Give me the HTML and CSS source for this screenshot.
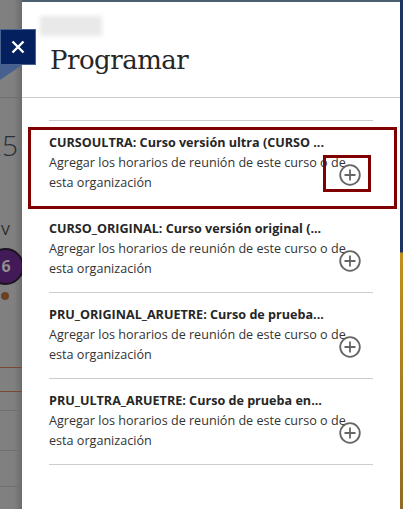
FILE: index.html
```html
<!DOCTYPE html>
<html lang="es">
<head>
<meta charset="utf-8">
<title>Programar</title>
<link rel="stylesheet" href="styles.css">
</head>
<body>
<div class="backdrop">
  <span class="bg-num">25</span>
  <span class="bg-v">V</span>
  <span class="bg-badge">6</span>
  <span class="bg-dot"></span>
  <span class="bg-line l0"></span>
  <span class="bg-line red l1"></span>
  <span class="bg-line red l2"></span>
  <span class="bg-line l3"></span>
  <span class="bg-line l4"></span>
  <span class="bg-line l5"></span>
</div>
<div class="right-edge"></div>
<button class="close" aria-label="Cerrar">
  <svg viewBox="0 0 14 14" width="14" height="14"><path d="M1.5 1.5 12.5 12.5M12.5 1.5 1.5 12.5" stroke="#fff" stroke-width="2.4" fill="none"/></svg>
</button>
<span class="fold"></span>
<main class="panel">
  <header class="head">
    <div class="crumb"></div>
    <h1>Programar</h1>
  </header>
  <ul class="list">
    <li class="row">
      <div class="name">CURSOULTRA: Curso versión ultra (CURSO ...</div>
      <p>Agregar los horarios de reunión de este curso o de esta organización</p>
      <svg class="plus" viewBox="0 0 22 22" width="22" height="22"><circle cx="11" cy="11" r="9.8"/><path d="M11 5.5V16.500M5.500 11H16.500"/></svg>
    </li>
    <li class="row">
      <div class="name">CURSO_ORIGINAL: Curso versión original (...</div>
      <p>Agregar los horarios de reunión de este curso o de esta organización</p>
      <svg class="plus" viewBox="0 0 22 22" width="22" height="22"><circle cx="11" cy="11" r="9.8"/><path d="M11 5.5V16.500M5.500 11H16.500"/></svg>
    </li>
    <li class="row">
      <div class="name">PRU_ORIGINAL_ARUETRE: Curso de prueba...</div>
      <p>Agregar los horarios de reunión de este curso o de esta organización</p>
      <svg class="plus" viewBox="0 0 22 22" width="22" height="22"><circle cx="11" cy="11" r="9.8"/><path d="M11 5.5V16.500M5.500 11H16.500"/></svg>
    </li>
    <li class="row">
      <div class="name">PRU_ULTRA_ARUETRE: Curso de prueba en...</div>
      <p>Agregar los horarios de reunión de este curso o de esta organización</p>
      <svg class="plus" viewBox="0 0 22 22" width="22" height="22"><circle cx="11" cy="11" r="9.8"/><path d="M11 5.5V16.500M5.500 11H16.500"/></svg>
    </li>
  </ul>
</main>
<div class="mark mark-row"></div>
<div class="mark mark-icon"></div>
</body>
</html>
```
FILE: styles.css
```css
* { box-sizing: border-box; }
html, body { margin: 0; height: 100%; }
body {
  position: relative;
  width: 403px;
  height: 509px;
  overflow: hidden;
  background: #7f7f7f;
  font-family: "Open Sans", sans-serif;
  color: #262626;
}
.backdrop {
  position: absolute;
  inset: 0 auto 0 0;
  width: 22px;
  background: linear-gradient(to right, #808080 0, #808080 14px, #6c6c6c 22px);
  overflow: hidden;
}
.bg-num {
  position: absolute; left: -14px; top: 126px;
  font: 300 28px/38px "Open Sans", sans-serif; color: #2a2f36;
}
.bg-v {
  position: absolute; left: 1px; top: 219px;
  font: 15px/20px "Open Sans", sans-serif; color: #2a2a2a;
}
.bg-badge {
  position: absolute; left: -13px; top: 248px;
  width: 37px; height: 37px; border-radius: 50%;
  background: #431a58; border: 2px solid #1b1420;
  color: #8f8f8f; font: 700 16px/33px "Open Sans", sans-serif;
  text-align: center; padding-left: 1px;
}
.bg-dot {
  position: absolute; left: 1px; top: 292px;
  width: 8px; height: 8px; border-radius: 50%; background: #6a4026;
}
.bg-line { position: absolute; left: 0; width: 22px; height: 1px; background: #707070; }
.bg-line.red { background: #7a4a30; }
.l0 { top: 97px; } .l1 { top: 367px; } .l2 { top: 391px; } .l3 { top: 410px; } .l4 { top: 450px; } .l5 { top: 486px; }
.right-edge {
  position: absolute; right: 0; top: 0; bottom: 0; width: 3px;
  background: linear-gradient(to bottom, #1d3461 0, #1d3461 252px, #c2901f 253px, #8f6a24 509px);
}
.panel {
  position: absolute;
  left: 22px; top: 2px;
  width: 378px; height: 507px;
  background: #fff;
  box-shadow: 0 -2px 0 #4b5f6c;
}
.head {
  height: 96px;
  padding: 14px 0 0 28px;
  border-bottom: 1px solid #cdcdcd;
}
.crumb {
  width: 62px; height: 20px;
  margin-left: -10px;
  background: #e9e9e9;
  filter: blur(2px);
}
h1 {
  margin: 7px 0 0;
  font: 400 26px/34px "DejaVu Serif", serif;
  letter-spacing: -0.5px;
  color: #262626;
}
.list {
  list-style: none;
  margin: 22px 0 0 27px;
  padding: 0;
  width: 324px;
  border-top: 1px solid #cdcdcd;
}
.row {
  position: relative;
  height: 86px;
  padding-top: 12px;
  border-bottom: 1px solid #cdcdcd;
}
.name {
  font-weight: 700;
  font-size: 12.6px;
  line-height: 20px;
  white-space: nowrap;
}
.row p {
  margin: 0;
  width: 300px;
  font-size: 12.6px;
  line-height: 20px;
  color: #333;
}
.plus {
  position: absolute;
  left: 290px; top: 43px;
  fill: none;
  stroke: #666;
  stroke-width: 1.800;
}
.close {
  position: absolute;
  left: 0; top: 29px;
  width: 36px; height: 36px;
  padding: 0;
  border: 1px solid #4a6291;
  background: #04205f;
  display: flex; align-items: center; justify-content: center;
  z-index: 2;
}
.fold {
  position: absolute;
  left: 0; top: 65px;
  border-style: solid;
  border-width: 15px 22px 0 0;
  border-color: #46618f transparent transparent transparent;
  z-index: 2;
}
.mark { position: absolute; border: 3px solid #800000; z-index: 3; }
.mark-row { left: 28px; top: 127px; width: 369px; height: 82px; }
.mark-icon { left: 323px; top: 155px; width: 48px; height: 37px; }
```
